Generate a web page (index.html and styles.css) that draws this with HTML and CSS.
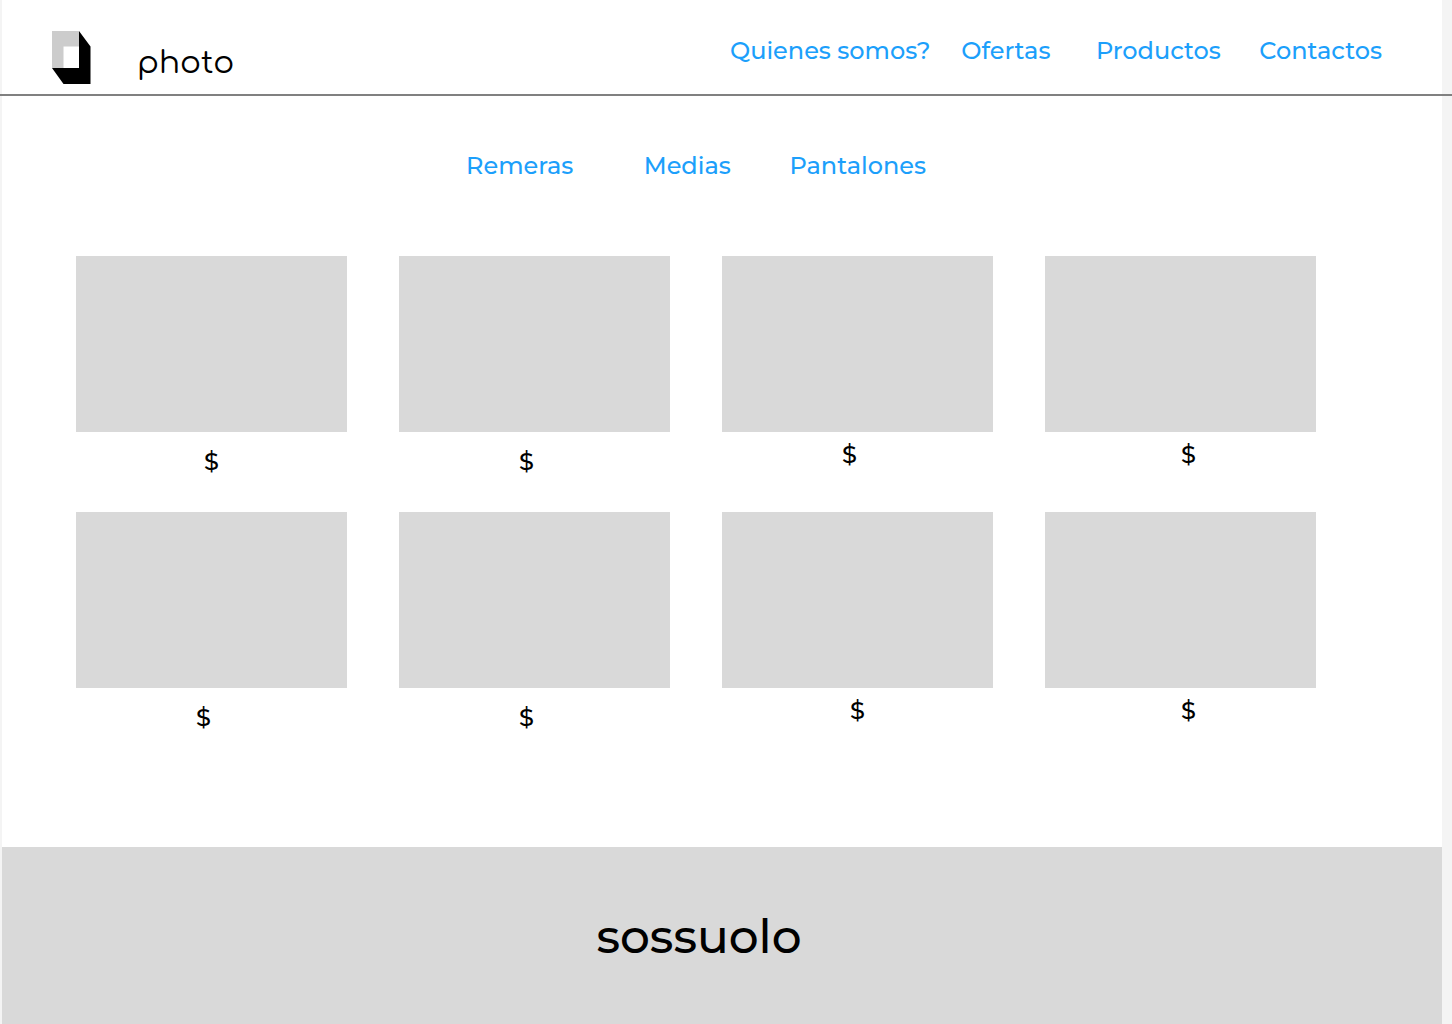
FILE: index.html
```html
<!DOCTYPE html>
<html lang="es">
<head>
<meta charset="utf-8">
<meta name="viewport" content="width=device-width, initial-scale=1">
<title>Productos</title>
<link rel="stylesheet" href="styles.css">
</head>
<body>
<header class="header">
  <div class="header-inner">
    <a class="brand" href="#">
      <svg class="brand-mark" viewBox="0 0 39 53" aria-hidden="true">
        <path fill="#ccc" d="M0 0h27v15.500H11.500v21.500H0z"/>
        <path d="M27 0l11.500 15.500v37.500H11.500L0 37h27z"/>
      </svg>
      <span class="brand-name">photo</span>
    </a>
    <nav class="main-nav">
      <a href="#">Quienes somos?</a>
      <a href="#">Ofertas</a>
      <a href="#">Productos</a>
      <a href="#">Contactos</a>
    </nav>
  </div>
</header>
<div class="page">
  <main class="main">
    <nav class="categories">
      <a href="#">Remeras</a>
      <a href="#">Medias</a>
      <a href="#">Pantalones</a>
    </nav>
    <section class="products">
      <article><div class="photo"></div><p class="price">$</p></article>
      <article><div class="photo"></div><p class="price price-left">$</p></article>
      <article><div class="photo"></div><p class="price price-left price-high">$</p></article>
      <article><div class="photo"></div><p class="price price-right price-high">$</p></article>
      <article><div class="photo"></div><p class="price price-left">$</p></article>
      <article><div class="photo"></div><p class="price price-left">$</p></article>
      <article><div class="photo"></div><p class="price price-high">$</p></article>
      <article><div class="photo"></div><p class="price price-right price-high">$</p></article>
    </section>
  </main>
  <footer class="footer">sossuolo</footer>
</div>
</body>
</html>
```
FILE: styles.css
```css
* {
  box-sizing: border-box;
}

body {
  display: flex;
  flex-direction: column;
  min-height: 100vh;
  margin: 0;
  background: #f4f4f4;
  color: #000;
  font: 500 24px/32px Montserrat, Inter, sans-serif;
}

a {
  color: #1c9ffb;
  text-decoration: none;
}

.header {
  padding: 0 10px 0 2px;
  border-bottom: 2px solid #808080;
}

.header-inner {
  display: flex;
  justify-content: space-between;
  align-items: flex-start;
  padding: 31px 60px 10px 50px;
  background: #fff;
}

.brand {
  display: flex;
  gap: 46px;
  color: #000;
}

.brand-mark {
  width: 39px;
  height: 53px;
}

.brand-name {
  height: 53px;
  font-family: Comfortaa, Quicksand, Montserrat, sans-serif;
  font-size: 31px;
  font-weight: 400;
  line-height: 64px;
}

.main-nav {
  display: grid;
  grid-template-columns: 232fr 135fr 164fr 121fr;
  flex: 0 1 652px;
  padding-top: 4px;
  white-space: nowrap;
}

.page {
  display: flex;
  flex: 1;
  flex-direction: column;
  margin: 0 10px 0 2px;
  background: #fff;
}

.main {
  flex: 1;
  padding: 54px 126px 79px 74px;
}

.categories {
  display: grid;
  grid-template-columns: 178fr 146fr 136fr;
  width: 460px;
  margin: 0 auto 74px;
}

.products {
  display: grid;
  grid-template-columns: repeat(4, 1fr);
  column-gap: 52px;
}

.photo {
  aspect-ratio: 271 / 176;
  background: #d9d9d9;
}

.price {
  height: 80px;
  margin: 0;
  padding-top: 14px;
  text-align: center;
}

.price-high {
  padding-top: 7px;
}

.price-left {
  padding-right: 16px;
}

.price-right {
  padding-left: 16px;
}

.footer {
  padding: 58px 46px 55px 0;
  background: #d9d9d9;
  font-size: 47px;
  line-height: 64px;
  text-align: center;
}
```
